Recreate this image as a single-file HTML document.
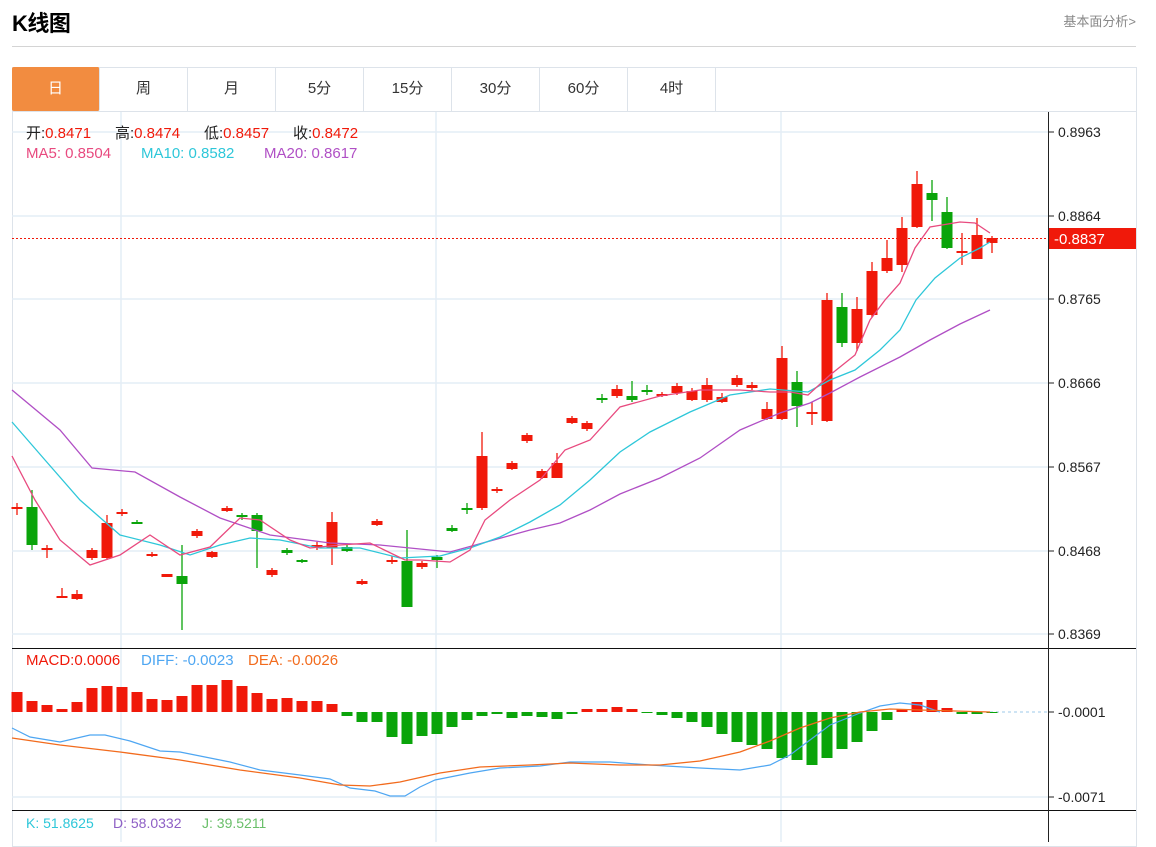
<!DOCTYPE html>
<html><head><meta charset="utf-8"><style>
*{margin:0;padding:0;box-sizing:border-box}
body{width:1156px;height:842px;background:#fff;font-family:"Liberation Sans","Noto Sans CJK SC",sans-serif;position:relative;overflow:hidden}
.t{position:absolute;left:12px;top:6px;font-size:22px;font-weight:bold;color:#000;letter-spacing:-0.5px}
.lk{position:absolute;right:20px;top:11px;font-size:13px;color:#888}
.hr{position:absolute;left:12px;top:46px;width:1124px;height:1px;background:#d4d4d4}
.box{position:absolute;left:12px;top:67px;width:1125px;height:780px;border:1px solid #dde3ea}
.tabs{position:absolute;left:12px;top:67px;height:45px;display:flex;border-bottom:1px solid #dde3ea;width:1125px}
.tabs div{width:88px;height:44px;line-height:44px;text-align:center;font-size:15px;color:#333;border-right:1px solid #dde3ea}
.tabs div.a{background:#f28c40;color:#fff;border-radius:2px}
svg{position:absolute;left:0;top:0}
.lg{position:absolute;font-size:15px;white-space:nowrap}
.r{color:#f0190a}
</style></head><body>
<div class="t">K线图</div>
<div class="lk">基本面分析&gt;</div>
<div class="hr"></div>
<div class="box"></div>
<div class="tabs"><div class="a">日</div><div>周</div><div>月</div><div>5分</div><div>15分</div><div>30分</div><div>60分</div><div>4时</div></div>
<svg id="s" width="1156" height="842" xmlns="http://www.w3.org/2000/svg">
<g stroke="#e4edf5" stroke-width="1.5">
<line x1="12" y1="132" x2="1048" y2="132"/><line x1="12" y1="216" x2="1048" y2="216"/><line x1="12" y1="299" x2="1048" y2="299"/><line x1="12" y1="383" x2="1048" y2="383"/><line x1="12" y1="467" x2="1048" y2="467"/><line x1="12" y1="551" x2="1048" y2="551"/><line x1="12" y1="634" x2="1048" y2="634"/><line x1="12" y1="797" x2="1048" y2="797"/>
<line x1="121" y1="112" x2="121" y2="842"/><line x1="436" y1="112" x2="436" y2="842"/><line x1="781" y1="112" x2="781" y2="842"/>
</g>
<line x1="12" y1="648.5" x2="1136" y2="648.5" stroke="#111"/>
<line x1="12" y1="810.5" x2="1136" y2="810.5" stroke="#111"/>
<line x1="1048.5" y1="112" x2="1048.5" y2="842" stroke="#222"/>
<g stroke="#222"><line x1="1048" y1="132" x2="1054" y2="132"/><line x1="1048" y1="216" x2="1054" y2="216"/><line x1="1048" y1="299" x2="1054" y2="299"/><line x1="1048" y1="383" x2="1054" y2="383"/><line x1="1048" y1="467" x2="1054" y2="467"/><line x1="1048" y1="551" x2="1054" y2="551"/><line x1="1048" y1="634" x2="1054" y2="634"/><line x1="1048" y1="712" x2="1054" y2="712"/><line x1="1048" y1="797" x2="1054" y2="797"/></g>
<g font-size="14" fill="#222" font-family="Liberation Sans,sans-serif">
<text x="1058" y="137">0.8963</text><text x="1058" y="221">0.8864</text><text x="1058" y="304">0.8765</text><text x="1058" y="388">0.8666</text><text x="1058" y="472">0.8567</text><text x="1058" y="556">0.8468</text><text x="1058" y="639">0.8369</text><text x="1058" y="717">-0.0001</text><text x="1058" y="802">-0.0071</text>
</g>
<line x1="12" y1="238.5" x2="1048" y2="238.5" stroke="#f0190a" stroke-dasharray="2,2"/>
<rect x="1049" y="228" width="87" height="21" fill="#f0190a"/>
<text x="1054" y="244" font-size="15" fill="#fff">-0.8837</text>
<line x1="990" y1="712" x2="1048" y2="712" stroke="#9cc8ea" stroke-dasharray="3,3"/>
<g id="c"></g>
<polyline fill="none" stroke="#b04fc5" stroke-width="1.3" points="12,390 60,430 92,468 135,472 180,497 220,518 270,535 330,543 380,545 420,549 450,552 490,541 530,530 560,523 590,510 620,494 660,478 700,458 740,430 780,413 810,403 830,393 860,377 900,357 930,340 960,324 990,310"/>
<polyline fill="none" stroke="#2ec7d9" stroke-width="1.3" points="12,422 45,460 80,500 120,535 160,545 190,555 220,545 250,538 280,540 320,548 360,548 400,558 440,556 470,548 500,537 530,522 560,505 590,480 620,452 650,432 690,412 730,395 770,389 808,392 830,380 855,370 880,350 900,330 916,300 935,278 960,258 980,248 990,242"/>
<polyline fill="none" stroke="#e84a7f" stroke-width="1.3" points="12,456 35,500 60,540 90,565 120,555 150,535 180,555 210,547 240,518 260,520 290,540 310,548 340,545 370,543 405,560 420,560 450,562 470,550 485,520 510,500 540,480 565,450 590,440 620,407 660,396 700,390 740,390 770,392 790,392 808,395 830,375 855,355 870,320 885,300 900,283 915,248 930,227 960,222 975,223 990,233"/>
<polyline fill="none" stroke="#4ea6f2" stroke-width="1.2" points="12,728 30,737 60,742 90,735 105,735 130,741 160,751 180,752 200,756 230,762 260,770 300,775 330,779 350,788 375,791 390,796 405,796 420,787 435,780 470,773 500,768 540,766 570,762 610,762 650,765 700,768 740,770 770,765 790,755 810,740 830,725 860,713 880,706 900,703 920,705 940,712"/>
<polyline fill="none" stroke="#f26b1d" stroke-width="1.3" points="12,738 60,745 120,752 180,760 240,770 300,778 340,785 370,786 400,782 440,773 480,767 530,765 570,763 620,765 660,765 700,761 740,752 770,741 800,728 830,718 860,712 890,709 920,710 990,712"/>
</svg>
<div class="lg" style="left:26px;top:122px;color:#222">开:<span class="r">0.8471</span></div>
<div class="lg" style="left:115px;top:122px;color:#222">高:<span class="r">0.8474</span></div>
<div class="lg" style="left:204px;top:122px;color:#222">低:<span class="r">0.8457</span></div>
<div class="lg" style="left:293px;top:122px;color:#222">收:<span class="r">0.8472</span></div>
<div class="lg" style="left:26px;top:145px;color:#e84a7f">MA5: 0.8504</div>
<div class="lg" style="left:141px;top:145px;color:#2ec7d9">MA10: 0.8582</div>
<div class="lg" style="left:264px;top:145px;color:#b04fc5">MA20: 0.8617</div>
<div class="lg" style="left:26px;top:652px;color:#f0190a">MACD:0.0006</div>
<div class="lg" style="left:141px;top:652px;color:#4ea6f2">DIFF: -0.0023</div>
<div class="lg" style="left:248px;top:652px;color:#f26b1d">DEA: -0.0026</div>
<div class="lg" style="left:26px;top:815px;font-size:14px;color:#2ec7d9">K: 51.8625</div>
<div class="lg" style="left:113px;top:815px;font-size:14px;color:#8e5fc5">D: 58.0332</div>
<div class="lg" style="left:202px;top:815px;font-size:14px;color:#6abf6a">J: 39.5211</div>
<script>
var R='#f0190a',G='#0aa40a';
var c=[[1,507,508,503,515],[0,507,545,490,550],[1,548,549,545,558],[1,596,597,588,598],[1,594,599,590,600],[1,550,558,548,560],[1,523,558,515,560],[1,512,513,509,516],[0,522,523,520,524],[1,554,556,552,557],[1,574,577,574,577],[0,576,584,545,630],[1,531,536,529,538],[1,552,557,551,558],[1,508,511,506,512],[0,515,517,513,520],[0,515,531,513,568],[1,570,575,568,577],[0,550,553,548,555],[0,560,562,559,563],[1,545,547,542,550],[1,522,548,512,565],[0,547,551,545,552],[1,581,584,579,585],[1,521,525,519,526],[1,560,561,556,564],[0,561,607,530,607],[1,563,567,561,569],[0,557,560,555,568],[0,528,531,525,532],[0,508,509,503,514],[1,456,508,432,510],[1,489,491,487,493],[1,463,469,461,470],[1,435,441,433,443],[1,471,478,469,479],[1,463,478,453,478],[1,418,423,416,424],[1,423,429,421,431],[0,398,399,394,403],[1,389,396,385,398],[0,396,400,381,402],[0,390,391,385,395],[1,394,396,392,397],[1,386,393,383,395],[1,391,400,388,401],[1,385,400,378,402],[1,397,402,393,403],[1,378,385,375,387],[1,385,388,382,390],[1,409,419,402,420],[1,358,419,346,420],[0,382,406,371,427],[1,412,413,402,425],[1,300,421,293,422],[0,307,343,293,347],[1,309,343,297,351],[1,271,315,262,317],[1,258,271,240,273],[1,228,265,217,272],[1,184,227,171,228],[0,193,200,180,221],[0,212,248,197,249],[1,251,253,233,265],[1,235,259,218,259],[1,238,243,236,253]];
var m=[692,701,705,709,702,688,686,687,692,699,700,696,685,685,680,686,693,699,698,701,701,704,716,722,722,737,744,736,734,727,720,716,714,718,716,717,719,714,709,709,707,709,713,715,718,722,727,734,742,745,749,758,760,765,758,749,742,731,720,709,702,700,708,714,714,713];
var s='';
c.forEach(function(d,i){var x=17+i*15,col=d[0]?R:G;
s+='<line x1="'+x+'" y1="'+d[3]+'" x2="'+x+'" y2="'+d[4]+'" stroke="'+col+'" stroke-width="1.3"/>';
var h=Math.max(d[2]-d[1],2);
s+='<rect x="'+(x-5.5)+'" y="'+d[1]+'" width="11" height="'+h+'" fill="'+col+'"/>';
var v=m[i];if(v!==undefined){var y0=Math.min(v,712),hh=Math.max(Math.abs(v-712),1);
s+='<rect x="'+(x-5.5)+'" y="'+y0+'" width="11" height="'+hh+'" fill="'+(v<712?R:G)+'"/>';}
});
document.getElementById('c').innerHTML=s;
</script>
</body></html>
